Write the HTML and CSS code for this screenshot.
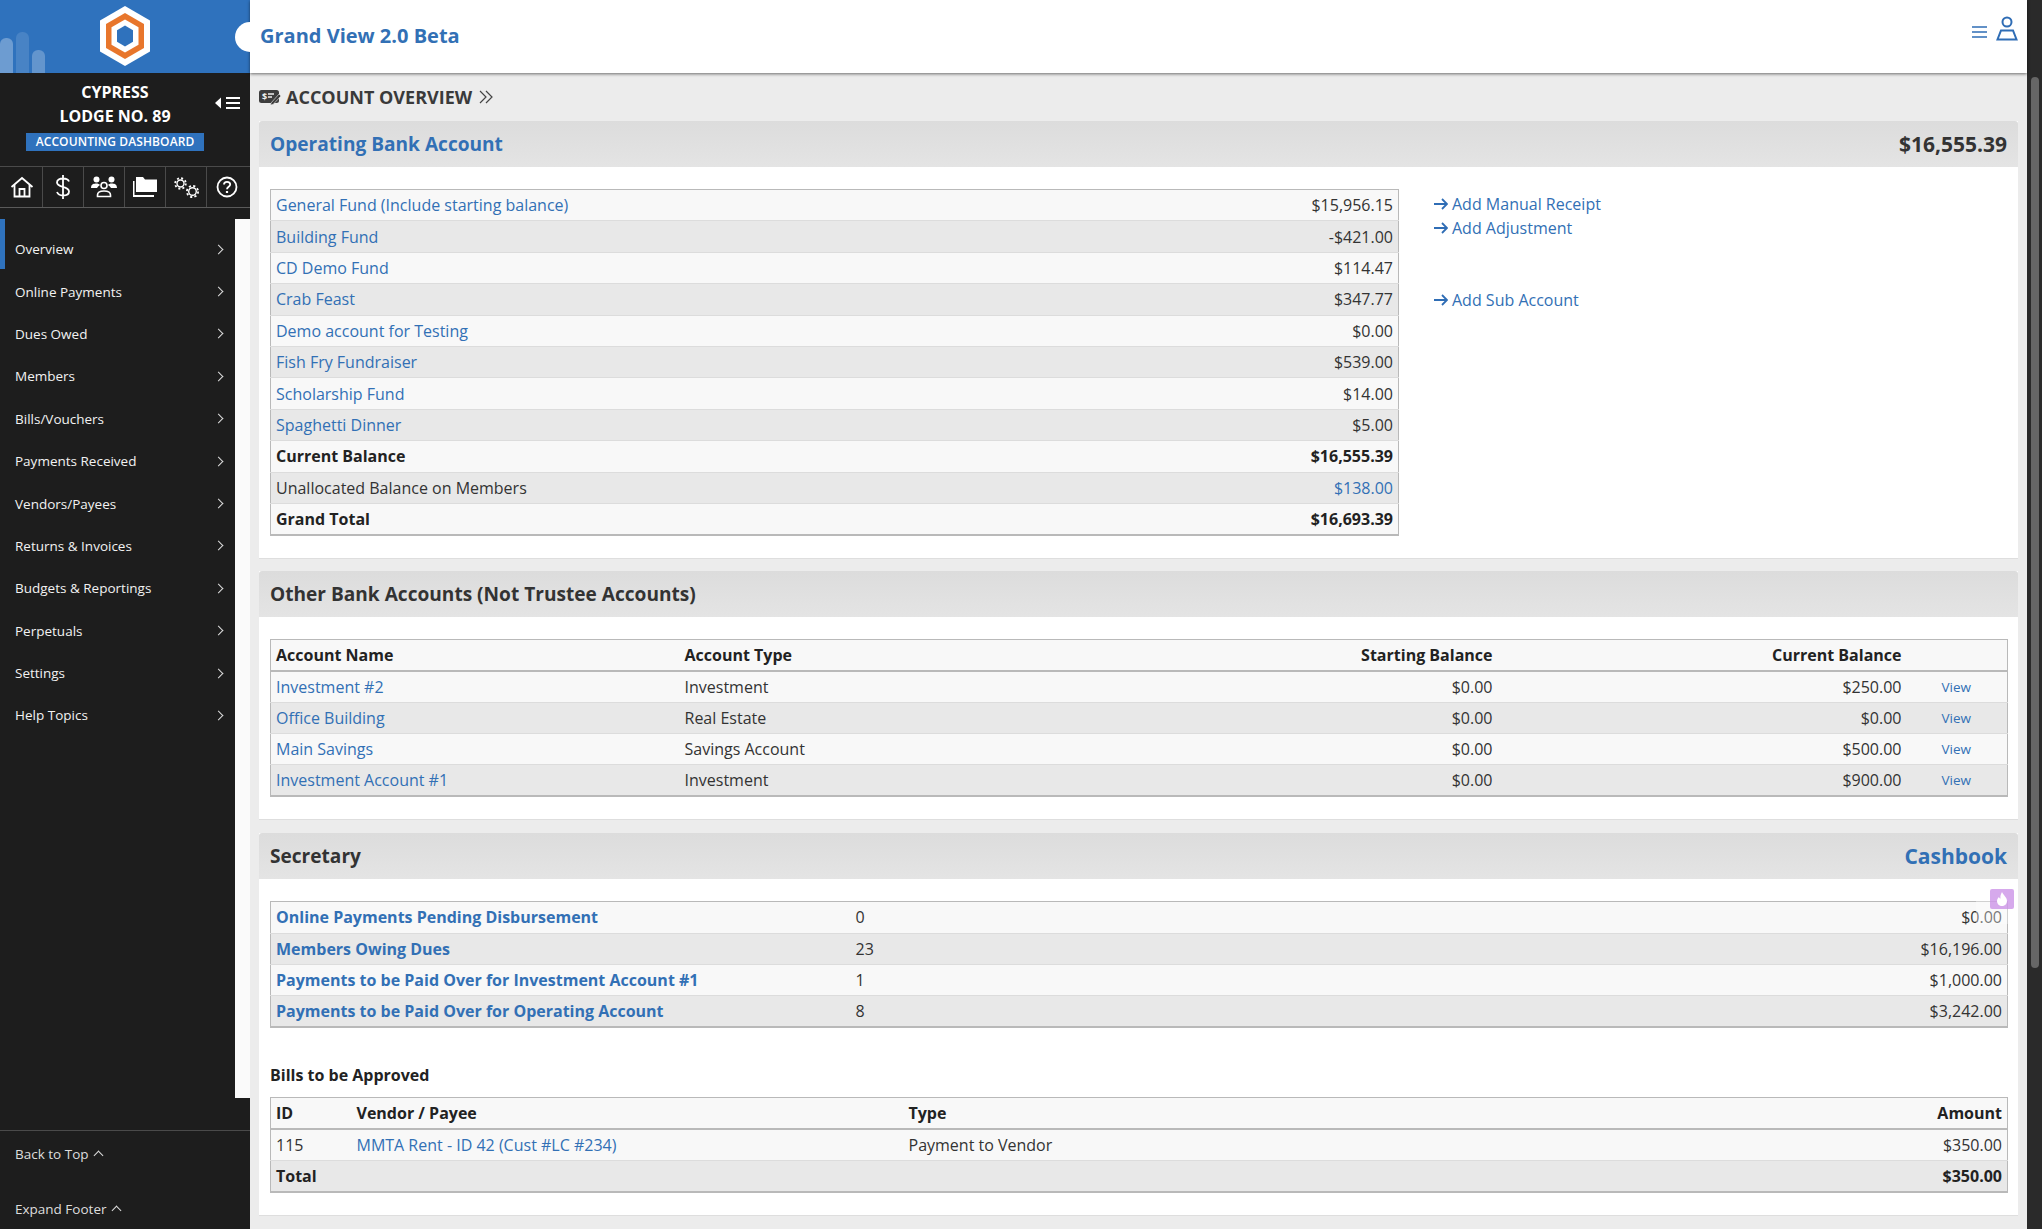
FILE: index.html
```html
<!DOCTYPE html>
<html lang="en">
<head>
<meta charset="utf-8">
<title>Grand View 2.0 Beta</title>
<link rel="stylesheet" href="styles.css">
</head>
<body>
<div class="app">
  <aside class="sidebar">
    <div class="brand">
      <div class="bars"><span class="b1"></span><span class="b2"></span><span class="b3"></span></div>
      <svg class="logo" viewBox="0 0 50 60" width="50" height="60"><path d="M25 0L50 14.500V45.500L25 60L0 45.500V14.500Z" fill="#fff"/><path d="M25 7L44 18V42L25 53L6 42V18Z" fill="#e8762c"/><path d="M25 13.500L38.500 21.300V38.700L25 46.500L11.500 38.700V21.300Z" fill="#fff"/><path d="M25 19.500L33 24.200V35.800L25 40.500L17 35.800V24.200Z" fill="#2f72bd"/></svg>
    </div>
    <div class="lodge">
      <div class="lodge-name">CYPRESS<br>LODGE NO. 89</div>
      <div class="lodge-tag">ACCOUNTING DASHBOARD</div>
      <svg class="collapse" viewBox="0 0 25 12" width="25" height="12"><path d="M0 6L6 0.500V11.500Z" fill="#fff"/><path d="M11 1H25M11 6H25M11 11H25" stroke="#fff" stroke-width="2"/></svg>
    </div>
    <div class="quick">
      <div class="quick-cell"><svg viewBox="0 0 24 24" width="24" height="24" fill="none" stroke="#fff" stroke-width="1.800"><path d="M1.500 12L12 3L22.500 12M4.500 10V21.500H19.500V10M9.500 21.500V14H14.500V21.500"/></svg></div>
      <div class="quick-cell"><svg viewBox="0 0 16 26" width="16" height="26" fill="none" stroke="#fff" stroke-width="1.800"><path d="M14 7.500C13 5 11 4.500 8 4.500C4.500 4.500 2 6 2 8.500C2 14 14 11.500 14 17.500C14 20.500 11.500 21.500 8 21.500C5 21.500 3 20.500 2 18M8 1V25"/></svg></div>
      <div class="quick-cell"><svg viewBox="0 0 26 22" width="26" height="22" fill="#fff"><circle cx="5.500" cy="3.500" r="3"/><circle cx="20.500" cy="3.500" r="3"/><path d="M0 12C0 8 3 7.500 5.500 7.500C7 7.500 8 8 9 9C7.500 10 6.500 11 6 12ZM26 12C26 8 23 7.500 20.500 7.500C19 7.500 18 8 17 9C18.500 10 19.500 11 20 12Z"/><circle cx="13" cy="9.500" r="3" fill="none" stroke="#fff" stroke-width="1.600"/><path d="M6.500 20.500V19C6.500 16 9 15 13 15C17 15 19.500 16 19.500 19V20.500Z" fill="none" stroke="#fff" stroke-width="1.600"/></svg></div>
      <div class="quick-cell"><svg viewBox="0 0 24 20" width="24" height="20" fill="#fff"><path d="M3 0H10L12 2.500H24V15H3Z"/><path d="M0 4H1.500V18H21V20H0Z"/></svg></div>
      <div class="quick-cell"><svg viewBox="0 0 25 21" width="25" height="21" fill="none" stroke="#fff"><circle cx="6.500" cy="6.500" r="3.500" stroke-width="1.400"/><circle cx="6.500" cy="6.500" r="5.300" stroke-width="1.800" stroke-dasharray="2 2.160"/><circle cx="18.500" cy="14.500" r="3.800" stroke-width="1.400"/><circle cx="18.500" cy="14.500" r="5.600" stroke-width="1.800" stroke-dasharray="2.200 2.200"/></svg></div>
      <div class="quick-cell"><svg viewBox="0 0 22 22" width="22" height="22" fill="none" stroke="#fff" stroke-width="1.800"><circle cx="11" cy="11" r="9.500"/><path d="M8 8.500C8 6.500 9.500 5.800 11 5.800C13 5.800 14.200 7 14.200 8.500C14.200 10.800 11 10.800 11 13.200"/><path d="M11 15V17" stroke-width="2.200"/></svg></div>
    </div>
    <div class="nav-wrap">
      <nav class="nav">
        <a class="nav-item active">Overview<span class="chev"></span></a>
        <a class="nav-item">Online Payments<span class="chev"></span></a>
        <a class="nav-item">Dues Owed<span class="chev"></span></a>
        <a class="nav-item">Members<span class="chev"></span></a>
        <a class="nav-item">Bills/Vouchers<span class="chev"></span></a>
        <a class="nav-item">Payments Received<span class="chev"></span></a>
        <a class="nav-item">Vendors/Payees<span class="chev"></span></a>
        <a class="nav-item">Returns &amp; Invoices<span class="chev"></span></a>
        <a class="nav-item">Budgets &amp; Reportings<span class="chev"></span></a>
        <a class="nav-item">Perpetuals<span class="chev"></span></a>
        <a class="nav-item">Settings<span class="chev"></span></a>
        <a class="nav-item">Help Topics<span class="chev"></span></a>
      </nav>
      <div class="nav-gutter"></div>
    </div>
    <div class="side-foot">
      <a class="foot-link">Back to Top<span class="up"></span></a>
      <a class="foot-link">Expand Footer<span class="up"></span></a>
    </div>
  </aside>
  <div class="main">
    <header class="topbar">
      <span class="knob"></span>
      <h1 class="app-title">Grand View 2.0 Beta</h1>
      <div class="top-icons">
        <svg class="menu-icon" viewBox="0 0 15 12" width="15" height="12" fill="none" stroke="#2f6db5" stroke-width="1.600"><path d="M0 1H15M0 6H15M0 11H15"/></svg>
        <svg viewBox="0 0 22 25" width="22" height="25" fill="none" stroke="#2f6db5" stroke-width="2"><circle cx="11" cy="6" r="4.500"/><path d="M5 14.500H17L20.500 23.500H1.500Z"/></svg>
      </div>
    </header>
    <div class="content">
      <div class="page-head">
        <svg viewBox="0 0 22 16" width="22" height="16"><rect x="0" y="1" width="20" height="13" rx="2.500" fill="#3d3d3d"/><text x="3" y="11" font-size="9" font-weight="700" fill="#f0f0f0" font-family="Open Sans">$</text><path d="M9 5H15M9 8H13" stroke="#f0f0f0" stroke-width="1.300"/><path d="M12 14L20 5L22 7L14 15.500L11.500 16Z" fill="#3d3d3d" stroke="#f0f0f0" stroke-width=".6"/></svg>
        <span class="page-title">ACCOUNT OVERVIEW</span>
        <svg class="crumb" viewBox="0 0 14 14" width="14" height="14" fill="none" stroke="#444" stroke-width="1.200"><path d="M1 1L7 7L1 13M7 1L13 7L7 13"/></svg>
      </div>

      <section class="panel panel-first">
        <div class="panel-head"><a class="panel-title link">Operating Bank Account</a><span class="panel-amt">$16,555.39</span></div>
        <div class="panel-body split">
          <table class="tbl fund">
            <tbody>
            <tr><td><a class="link">General Fund (Include starting balance)</a></td><td class="r">$15,956.15</td></tr>
            <tr><td><a class="link">Building Fund</a></td><td class="r">-$421.00</td></tr>
            <tr><td><a class="link">CD Demo Fund</a></td><td class="r">$114.47</td></tr>
            <tr><td><a class="link">Crab Feast</a></td><td class="r">$347.77</td></tr>
            <tr><td><a class="link">Demo account for Testing</a></td><td class="r">$0.00</td></tr>
            <tr><td><a class="link">Fish Fry Fundraiser</a></td><td class="r">$539.00</td></tr>
            <tr><td><a class="link">Scholarship Fund</a></td><td class="r">$14.00</td></tr>
            <tr><td><a class="link">Spaghetti Dinner</a></td><td class="r">$5.00</td></tr>
            <tr class="b"><td>Current Balance</td><td class="r">$16,555.39</td></tr>
            <tr><td>Unallocated Balance on Members</td><td class="r"><a class="link">$138.00</a></td></tr>
            <tr class="b"><td>Grand Total</td><td class="r">$16,693.39</td></tr>
            </tbody>
          </table>
          <div class="actions">
            <a class="action link"><svg viewBox="0 0 14 12" width="14" height="12" fill="none" stroke="#2f6db5" stroke-width="1.800"><path d="M0 6H13M8 1L13 6L8 11"/></svg>Add Manual Receipt</a>
            <a class="action link"><svg viewBox="0 0 14 12" width="14" height="12" fill="none" stroke="#2f6db5" stroke-width="1.800"><path d="M0 6H13M8 1L13 6L8 11"/></svg>Add Adjustment</a>
            <a class="action link spaced"><svg viewBox="0 0 14 12" width="14" height="12" fill="none" stroke="#2f6db5" stroke-width="1.800"><path d="M0 6H13M8 1L13 6L8 11"/></svg>Add Sub Account</a>
          </div>
        </div>
      </section>

      <section class="panel">
        <div class="panel-head"><span class="panel-title">Other Bank Accounts (Not Trustee Accounts)</span></div>
        <div class="panel-body">
          <table class="tbl other">
            <colgroup><col class="c1"><col class="c2"><col class="c3"><col class="c4"><col class="c5"></colgroup>
            <thead><tr class="h"><td>Account Name</td><td>Account Type</td><td class="r">Starting Balance</td><td class="r">Current Balance</td><td></td></tr></thead>
            <tbody>
            <tr><td><a class="link">Investment #2</a></td><td>Investment</td><td class="r">$0.00</td><td class="r">$250.00</td><td class="view"><a class="link">View</a></td></tr>
            <tr><td><a class="link">Office Building</a></td><td>Real Estate</td><td class="r">$0.00</td><td class="r">$0.00</td><td class="view"><a class="link">View</a></td></tr>
            <tr><td><a class="link">Main Savings</a></td><td>Savings Account</td><td class="r">$0.00</td><td class="r">$500.00</td><td class="view"><a class="link">View</a></td></tr>
            <tr><td><a class="link">Investment Account #1</a></td><td>Investment</td><td class="r">$0.00</td><td class="r">$900.00</td><td class="view"><a class="link">View</a></td></tr>
            </tbody>
          </table>
        </div>
      </section>

      <section class="panel">
        <div class="panel-head"><span class="panel-title">Secretary</span><a class="panel-amt link big">Cashbook</a></div>
        <div class="panel-body">
          <table class="tbl sec">
            <colgroup><col class="s1"><col class="s2"><col class="s3"></colgroup>
            <tbody>
            <tr><td><a class="link strong">Online Payments Pending Disbursement</a></td><td>0</td><td class="r">$0.00</td></tr>
            <tr><td><a class="link strong">Members Owing Dues</a></td><td>23</td><td class="r">$16,196.00</td></tr>
            <tr><td><a class="link strong">Payments to be Paid Over for Investment Account #1</a></td><td>1</td><td class="r">$1,000.00</td></tr>
            <tr><td><a class="link strong">Payments to be Paid Over for Operating Account</a></td><td>8</td><td class="r">$3,242.00</td></tr>
            </tbody>
          </table>
          <h3 class="sub">Bills to be Approved</h3>
          <table class="tbl bills">
            <colgroup><col class="d1"><col class="d2"><col class="d3"><col class="d4"></colgroup>
            <thead><tr class="h"><td>ID</td><td>Vendor / Payee</td><td>Type</td><td class="r">Amount</td></tr></thead>
            <tbody>
            <tr><td>115</td><td><a class="link">MMTA Rent - ID 42 (Cust #LC #234)</a></td><td>Payment to Vendor</td><td class="r">$350.00</td></tr>
            <tr class="b"><td>Total</td><td></td><td></td><td class="r">$350.00</td></tr>
            </tbody>
          </table>
        </div>
      </section>
    </div>
  </div>
  <div class="scrollbar"><div class="thumb"></div></div>
</div>
<div class="fab-shade"></div>
<div class="fab"><svg viewBox="0 0 12 14" width="12" height="14" fill="#fff"><path d="M6 0C7 3 11 5 11 9C11 12 8.500 14 6 14C3.500 14 1 12 1 9C1 7 2 6 3 5C3.300 6 4 6.500 4.500 6.500C4 4 5 2 6 0Z"/></svg></div>
</body>
</html>
```
FILE: styles.css
```css
*{box-sizing:border-box}
html,body{margin:0;height:1229px;overflow:hidden}
body{font-family:"Open Sans",sans-serif;font-size:16px;color:#333;background:#ececec;position:relative}
a{text-decoration:none}
.link{color:#3270b5}
.app{display:flex;height:1229px}
.sidebar{width:250px;flex:none;background:#1d1d1d;color:#fff;display:flex;flex-direction:column;overflow:hidden}
.brand{height:73px;flex:none;background:#2f72bd;display:flex;justify-content:center;position:relative;padding-top:6px}
.bars{position:absolute;left:0;bottom:0;display:flex;align-items:flex-end;gap:3px}
.bars span{display:block;width:13px;border-radius:6px 6px 0 0}
.bars .b1{height:35px;background:rgba(255,255,255,.3)}
.bars .b2{height:41px;background:rgba(255,255,255,.12)}
.bars .b3{height:23px;background:rgba(255,255,255,.25)}
.lodge{height:94px;flex:none;border-bottom:1px solid #4a4a4a;display:flex;flex-direction:column;align-items:center;padding:7px 20px 0 0;position:relative}
.lodge-name{font-size:16px;font-weight:700;line-height:24px;text-align:center}
.lodge-tag{margin-top:5px;background:#2f72bd;font-size:12px;font-weight:600;line-height:18px;width:178px;text-align:center;letter-spacing:.1px}
.collapse{position:absolute;left:215px;top:24px}
.quick{display:flex;height:41px;flex:none;border-bottom:1px solid #5a5a5a}
.quick-cell{width:41px;height:40px;border-right:1px solid #4a4a4a;display:flex;align-items:center;justify-content:center}
.quick-cell:first-child{width:43px;padding-left:2px}
.quick-cell:last-child{border-right:0;padding-right:2px}
.nav-wrap{display:flex;height:879px;flex:none;margin-top:11px}
.nav{width:235px;padding-top:9px}
.nav-gutter{width:15px;background:#fafafa}
.nav-item{display:flex;align-items:center;justify-content:space-between;height:42.400px;padding:0 13px 0 15px;font-size:13.500px;color:#f2f2f2;position:relative}
.nav-item.active::before{content:"";position:absolute;left:0;top:-9px;bottom:1px;width:5px;background:#2f72bd}
.chev{width:7px;height:7px;border-top:1.500px solid #ddd;border-right:1.500px solid #ddd;transform:rotate(45deg)}
.side-foot{margin-top:32px;border-top:1px solid #4a4a4a;display:flex;flex-direction:column;gap:9px}
.foot-link{display:flex;align-items:center;gap:6px;height:46px;flex:none;padding-left:15px;font-size:13.500px;color:#ddd}
.up{width:7px;height:7px;border-top:1.500px solid #ddd;border-left:1.500px solid #ddd;transform:rotate(45deg);margin-top:3px}
.main{flex:1;min-width:0;display:flex;flex-direction:column}
.topbar{height:73px;flex:none;background:#fff;box-shadow:0 1px 3px rgba(0,0,0,.55);display:flex;align-items:center;padding:0 9px 0 10px;position:relative;z-index:2}
.knob{position:absolute;left:-15px;top:22px;width:30px;height:30px;border-radius:50%;background:#fff;clip-path:inset(0 15px 0 0)}
.app-title{margin:-3px 0 0;font-size:20px;font-weight:700;color:#3270b5;flex:1;line-height:67px}
.top-icons{display:flex;align-items:flex-end;gap:9px;margin-top:-17px}
.menu-icon{margin-bottom:3px}
.content{flex:1;padding:0 9px 0 9px;overflow:hidden}
.page-head{height:48px;display:flex;align-items:center;gap:5px}
.page-title{font-size:18px;font-weight:700;color:#3a3a3a}
.crumb{margin-left:2px}
.panel{background:#fff;margin-bottom:13px;border-bottom:1px solid #dedede}
.panel-first{margin-bottom:12px}
.panel-head{height:46px;background:linear-gradient(#dcdcdc,#e4e4e4);display:flex;align-items:center;justify-content:space-between;padding:0 11px;border-radius:3px 3px 0 0}
.panel-title{font-size:19.100px;font-weight:700}
.panel-amt{font-size:21px;font-weight:700}
.panel-body{padding:22px 10px 22px 11px}
.split{display:flex}
.tbl{border-collapse:collapse;width:100%;table-layout:fixed;border:1px solid #b9b9b9;border-bottom:2px solid #b9b9b9;background:#fff}
.tbl td{height:31.400px;padding:0 5px;font-size:16px;line-height:20px;border-top:1px solid #dcdcdc;white-space:nowrap}
.tbl tr:first-child td{border-top:0}
.tbl tr:nth-child(odd) td{background:#f8f8f8}
.tbl tr:nth-child(even) td{background:#e8e8e8}
.tbl .r{text-align:right}
.tbl .b td,.tbl .h td{font-weight:700;color:#222}
.tbl .h td{border-bottom:2px solid #b9b9b9}
.fund{width:1129px;flex:none}
.fund td:last-child{width:180px}
.actions{margin-left:35px;display:flex;flex-direction:column}
.action{display:flex;align-items:center;gap:4px;font-size:16px;height:24px}
.action:first-child{margin-top:3px}
.action.spaced{margin-top:48px}
.other .c1{width:409px}.other .c2{width:300px}.other .c3{width:518px}.other .c4{width:409px}
.other .view{font-size:13.500px;padding-left:35px}
.sec .s1{width:580px}.sec .s2{width:400px}
.strong{font-weight:700}
.sub{margin:36px 0 11px;font-size:16px;font-weight:700;line-height:22px;color:#222}
.bills .d1{width:81px}.bills .d2{width:552px}.bills .d3{width:600px}
.scrollbar{width:15px;flex:none;background:#2a2a2a;padding:77px 3px 0 4px}
.thumb{height:891px;background:#666;border-radius:5px}
.fab-shade{position:absolute;left:1976px;top:880px;width:42px;height:44px;background:rgba(255,255,255,.35)}
.fab{position:absolute;left:1990px;top:889px;width:24px;height:20px;background:rgba(200,140,230,.75);border-radius:2px;display:flex;align-items:center;justify-content:center}
```
